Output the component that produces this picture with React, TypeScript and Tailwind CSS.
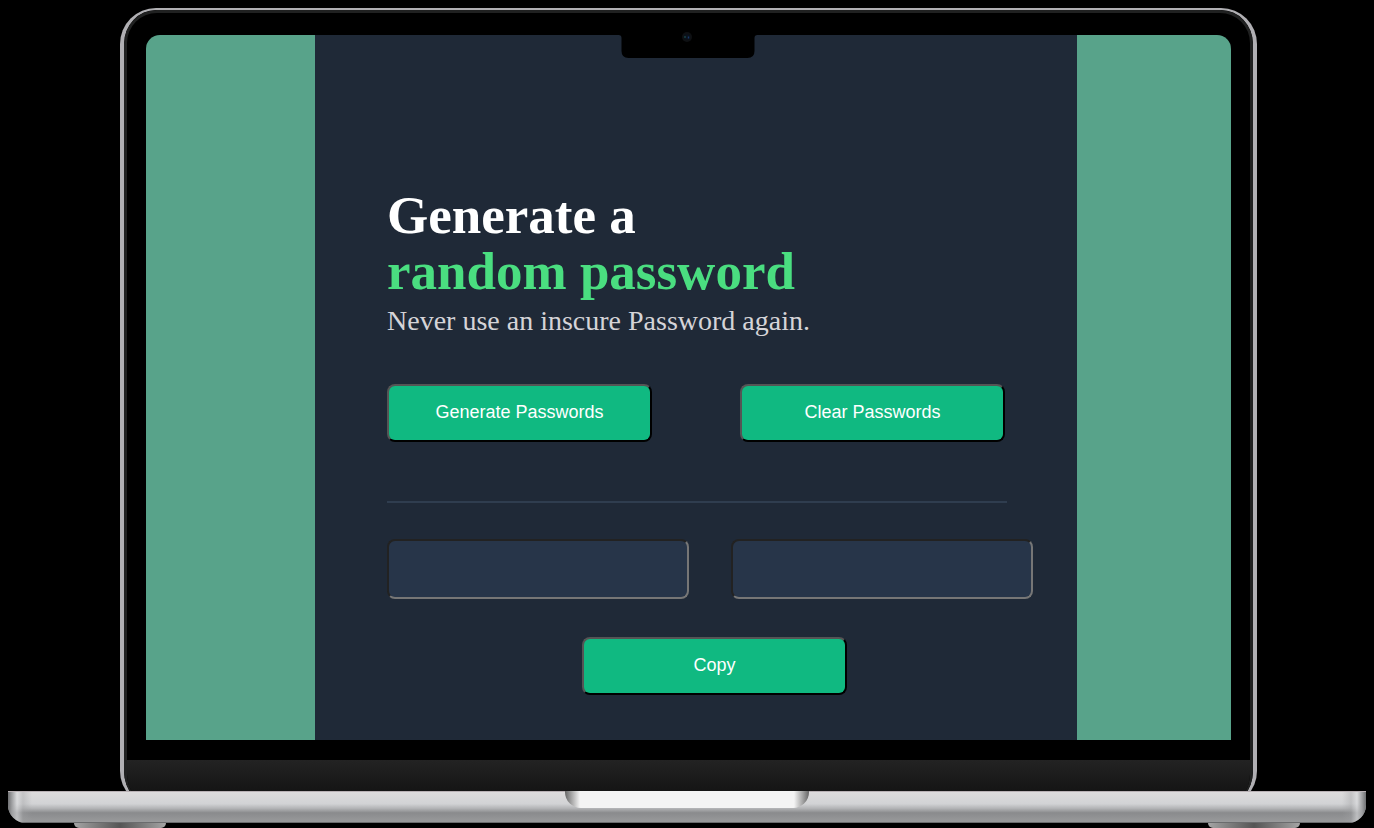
import { useState } from "react";
import type { ReactNode } from "react";

const CHARACTERS =
  "ABCDEFGHIJKLMNOPQRSTUVWXYZabcdefghijklmnopqrstuvwxyz0123456789!@#$%^&*()-_=+";

function createPassword(length = 15): string {
  let result = "";
  for (let i = 0; i < length; i++) {
    result += CHARACTERS[Math.floor(Math.random() * CHARACTERS.length)];
  }
  return result;
}

function ActionButton({ children, onClick }: { children: ReactNode; onClick: () => void }) {
  return (
    <button
      type="button"
      onClick={onClick}
      className="h-[58px] w-[265px] shrink-0 cursor-pointer rounded-lg border-2 border-t-[#555555] border-r-black border-b-black border-l-[#555555] bg-[#10b981] pb-0.5 font-['Liberation_Sans',Arial,sans-serif] text-[18px] leading-6 text-white"
    >
      {children}
    </button>
  );
}

function PasswordBox({ label, value }: { label: string; value: string }) {
  return (
    <input
      type="text"
      readOnly
      aria-label={label}
      value={value}
      className="h-[60px] w-[302px] shrink-0 rounded-lg border-2 border-t-[#222222] border-r-[#767676] border-b-[#767676] border-l-[#222222] bg-[#273549] text-center font-['Liberation_Sans',Arial,sans-serif] text-[18px] text-[#55f991] outline-none"
    />
  );
}

function PasswordGenerator() {
  const [passwords, setPasswords] = useState(["", ""]);

  return (
    <main className="bg-[#1f2937] pt-[152px] pb-[45px] pl-[72px] font-['Liberation_Serif','Times_New_Roman',serif]">
      <h1 className="text-[53px] leading-[56px] font-bold text-white">
        Generate a<span className="block text-[#4ade80]">random password</span>
      </h1>
      <p className="text-[28px] leading-[44px] text-[#d5d4d8]">Never use an inscure Password again.</p>

      <div className="mt-[41px] flex gap-[88px]">
        <ActionButton onClick={() => setPasswords([createPassword(), createPassword()])}>
          Generate Passwords
        </ActionButton>
        <ActionButton onClick={() => setPasswords(["", ""])}>Clear Passwords</ActionButton>
      </div>

      <hr className="mt-[59px] mr-[70px] border-t-2 border-[#2f3d4f]" />

      <div className="mt-9 flex gap-[42px]">
        <PasswordBox label="First password" value={passwords[0]} />
        <PasswordBox label="Second password" value={passwords[1]} />
      </div>

      <div className="mt-[38px] mr-[35px] flex justify-center">
        <ActionButton onClick={() => navigator.clipboard?.writeText(passwords.join("\n"))}>Copy</ActionButton>
      </div>
    </main>
  );
}

function CameraNotch() {
  return (
    <svg
      className="absolute top-0 left-1/2 h-[30px] w-[141px] -translate-x-1/2"
      viewBox="0 0 141 30"
      aria-hidden="true"
    >
      <path d="M0 0H141V7H140Q137 7 137 10V23Q137 30 130 30H11Q4 30 4 23V10Q4 7 1 7H0Z" fill="#000" />
      <circle cx="69.5" cy="9" r="5" fill="#0e1013" />
      <circle cx="69.5" cy="9" r="3" fill="#0a111b" />
      <path d="M67.5 8v2" stroke="#184247" strokeWidth="1.4" />
      <path d="M71 8.5v2" stroke="#183568" strokeWidth="1.4" />
    </svg>
  );
}

function LaptopBase() {
  return (
    <div className="relative -mt-4">
      <div className="relative h-8 overflow-hidden rounded-b-[18px] bg-[linear-gradient(to_bottom,#dedcdd_0%,#d2d3d5_40%,#b4b5b7_54%,#8a8b8d_68%,#909193_80%,#9b9c9d_100%)]">
        <div className="absolute inset-y-0 left-0 w-6 bg-[linear-gradient(to_right,#6f7072_0,#a0a1a3_4px,#dcdddf99_9px,#a0a1a366_15px,transparent_24px)]" />
        <div className="absolute inset-y-0 right-0 w-6 bg-[linear-gradient(to_left,#6f7072_0,#a0a1a3_4px,#dcdddf99_9px,#a0a1a366_15px,transparent_24px)]" />
        <div className="absolute inset-x-0 top-0 h-px bg-[#b9b1b5]" />
        <div className="absolute inset-x-0 bottom-0 h-px bg-[#6b6c6e]" />
        <div className="relative mx-auto h-[17px] w-[244px] rounded-b-2xl bg-[linear-gradient(to_right,#666_0,#aaa_7px,#f4f4f4_15px,#f4f4f4_229px,#aaa_237px,#666_244px)]" />
      </div>
      <div className="flex justify-between px-[66px]">
        <div className="h-[5px] w-[92px] rounded-b-md bg-linear-to-r from-[#a5a5a5] via-[#555] to-[#a5a5a5]" />
        <div className="h-[5px] w-[92px] rounded-b-md bg-linear-to-r from-[#a5a5a5] via-[#555] to-[#a5a5a5]" />
      </div>
    </div>
  );
}

export default function App() {
  return (
    <div className="min-h-screen bg-black px-2 pt-2">
      <div className="mr-[109px] ml-28 overflow-hidden rounded-[36px] border-x-4 border-t-2 border-[#b0afb3]">
        <div className="overflow-hidden rounded-[33px] border-x-3 border-t-3 border-[#202121] bg-black">
          <div className="px-[19px] pt-[22px] pb-5">
            <div className="relative rounded-t-[14px] bg-[#58a38a] pr-[154px] pl-[169px]">
              <PasswordGenerator />
              <div className="absolute -top-[7px] right-0.5 left-0 h-[30px]">
                <CameraNotch />
              </div>
            </div>
          </div>
          <div className="h-[47px] bg-linear-to-b from-[#232323] to-[#0e0e0e]" />
        </div>
      </div>
      <LaptopBase />
    </div>
  );
}
